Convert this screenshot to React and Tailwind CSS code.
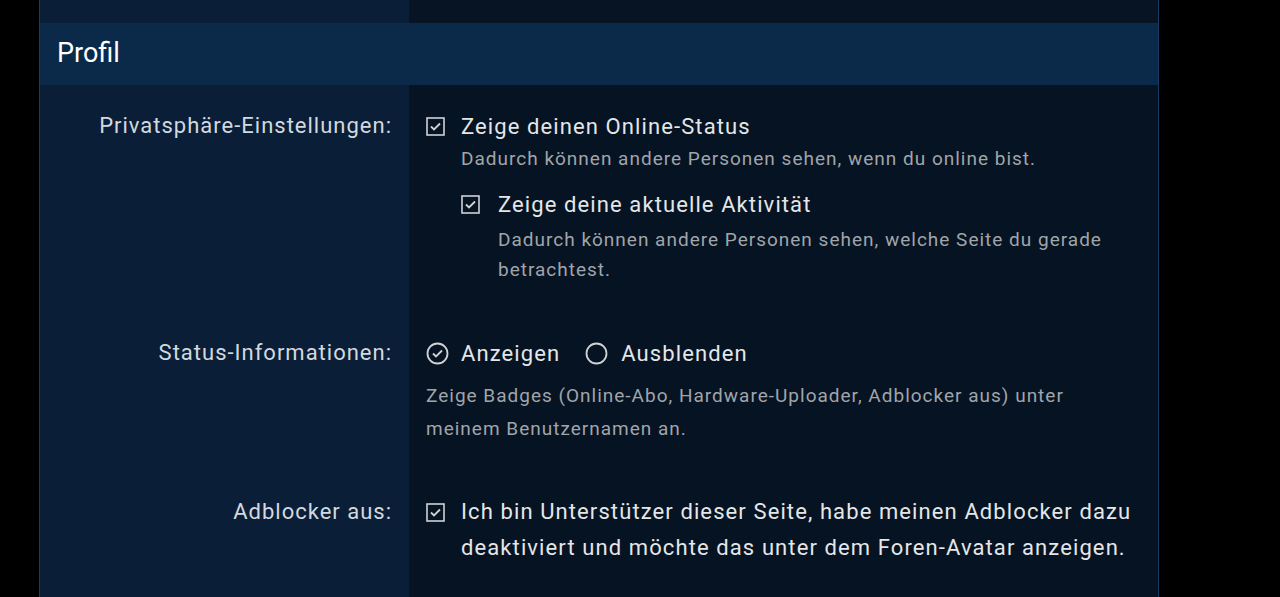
import React from "react";

const CheckBox = () => (
  <svg width="19" height="19" viewBox="0 0 19 19" className="shrink-0">
    <rect x="1" y="1" width="17" height="17" fill="none" stroke="#d0d3d6" strokeWidth="1.6" />
    <polyline points="5,9.5 8,12.5 14,6.5" fill="none" stroke="#d0d3d6" strokeWidth="1.8" strokeLinejoin="miter" />
  </svg>
);

const RadioOn = () => (
  <svg width="23" height="23" viewBox="0 0 23 23" className="shrink-0">
    <circle cx="11.5" cy="11.5" r="10" fill="none" stroke="#d0d3d6" strokeWidth="1.8" />
    <polyline points="7,11.5 10,14.5 16,8.5" fill="none" stroke="#d0d3d6" strokeWidth="1.8" />
  </svg>
);

const RadioOff = () => (
  <svg width="23" height="23" viewBox="0 0 23 23" className="shrink-0">
    <circle cx="11.5" cy="11.5" r="10" fill="none" stroke="#d0d3d6" strokeWidth="1.8" />
  </svg>
);

const Row = ({ label, children, className = "" }) => (
  <div className={"flex " + className}>
    <div className="w-[369px] shrink-0 bg-[#0a1f37] pr-[17px] text-right text-[22px] tracking-[1px] leading-[30px] text-[#d3d9df]">
      {label}
    </div>
    <div className="flex-1 pl-[17px] pr-[17px]">{children}</div>
  </div>
);

export default function App() {
  return (
    <div
      className="h-[597px] overflow-hidden bg-black"
      style={{ fontFamily: "Roboto, 'Liberation Sans', sans-serif" }}
    >
      <div className="ml-[39px] w-[1120px] h-full border-l border-r border-[#1a3c63] bg-[#061322] flex flex-col">
        <div className="flex h-[23px] shrink-0">
          <div className="w-[369px] bg-[#0a1f37]" />
          <div className="flex-1 bg-[#061423]" />
        </div>
        <div className="h-[62px] shrink-0 bg-[#0b2a4a] pl-[17px] pb-[2px] flex items-center text-[27px] text-white">
          Profil
        </div>
        <div className="flex-1 flex flex-col">
          <Row label={<div className="pt-[26px]">Privatsphäre-Einstellungen:</div>} className="h-[253px]">
            <div className="pt-[26px]">
              <div className="flex items-center gap-[16px] h-[30px] text-[22px] tracking-[1.1px] text-[#e4e6e8]">
                <CheckBox />
                <span>Zeige deinen Online-Status</span>
              </div>
              <div className="pl-[35px] mt-[3px] text-[19px] tracking-[1px] leading-[30px] text-[#a0a5aa]">
                Dadurch können andere Personen sehen, wenn du online bist.
              </div>
              <div className="pl-[35px] mt-[15px]">
                <div className="flex items-center gap-[18px] h-[30px] text-[22px] tracking-[1.1px] text-[#e4e6e8]">
                  <CheckBox />
                  <span>Zeige deine aktuelle Aktivität</span>
                </div>
                <div className="pl-[37px] mt-[6px] text-[19px] tracking-[1px] leading-[30px] text-[#a0a5aa]">
                  Dadurch können andere Personen sehen, welche Seite du gerade betrachtest.
                </div>
              </div>
            </div>
          </Row>
          <Row label={<div>Status-Informationen:</div>} className="h-[156px]">
            <div>
              <div className="flex items-center h-[30px] text-[22px] tracking-[1.1px] text-[#e4e6e8]">
                <RadioOn />
                <span className="ml-[12px]">Anzeigen</span>
                <span className="ml-[25px]"><RadioOff /></span>
                <span className="ml-[13px]">Ausblenden</span>
              </div>
              <div className="mt-[11px] text-[19px] tracking-[1px] leading-[33px] text-[#a0a5aa] max-w-[650px]">
                Zeige Badges (Online-Abo, Hardware-Uploader, Adblocker aus) unter meinem Benutzernamen an.
              </div>
            </div>
          </Row>
          <Row label={<div className="leading-[36px]">Adblocker aus:</div>} className="flex-1">
            <div className="flex gap-[16px] text-[22px] tracking-[1.1px] leading-[36px] text-[#e4e6e8]">
              <div className="h-[36px] flex items-center"><CheckBox /></div>
              <span>
                Ich bin Unterstützer dieser Seite, habe meinen Adblocker dazu deaktiviert und möchte das unter dem Foren-Avatar anzeigen.
              </span>
            </div>
          </Row>
        </div>
      </div>
    </div>
  );
}
